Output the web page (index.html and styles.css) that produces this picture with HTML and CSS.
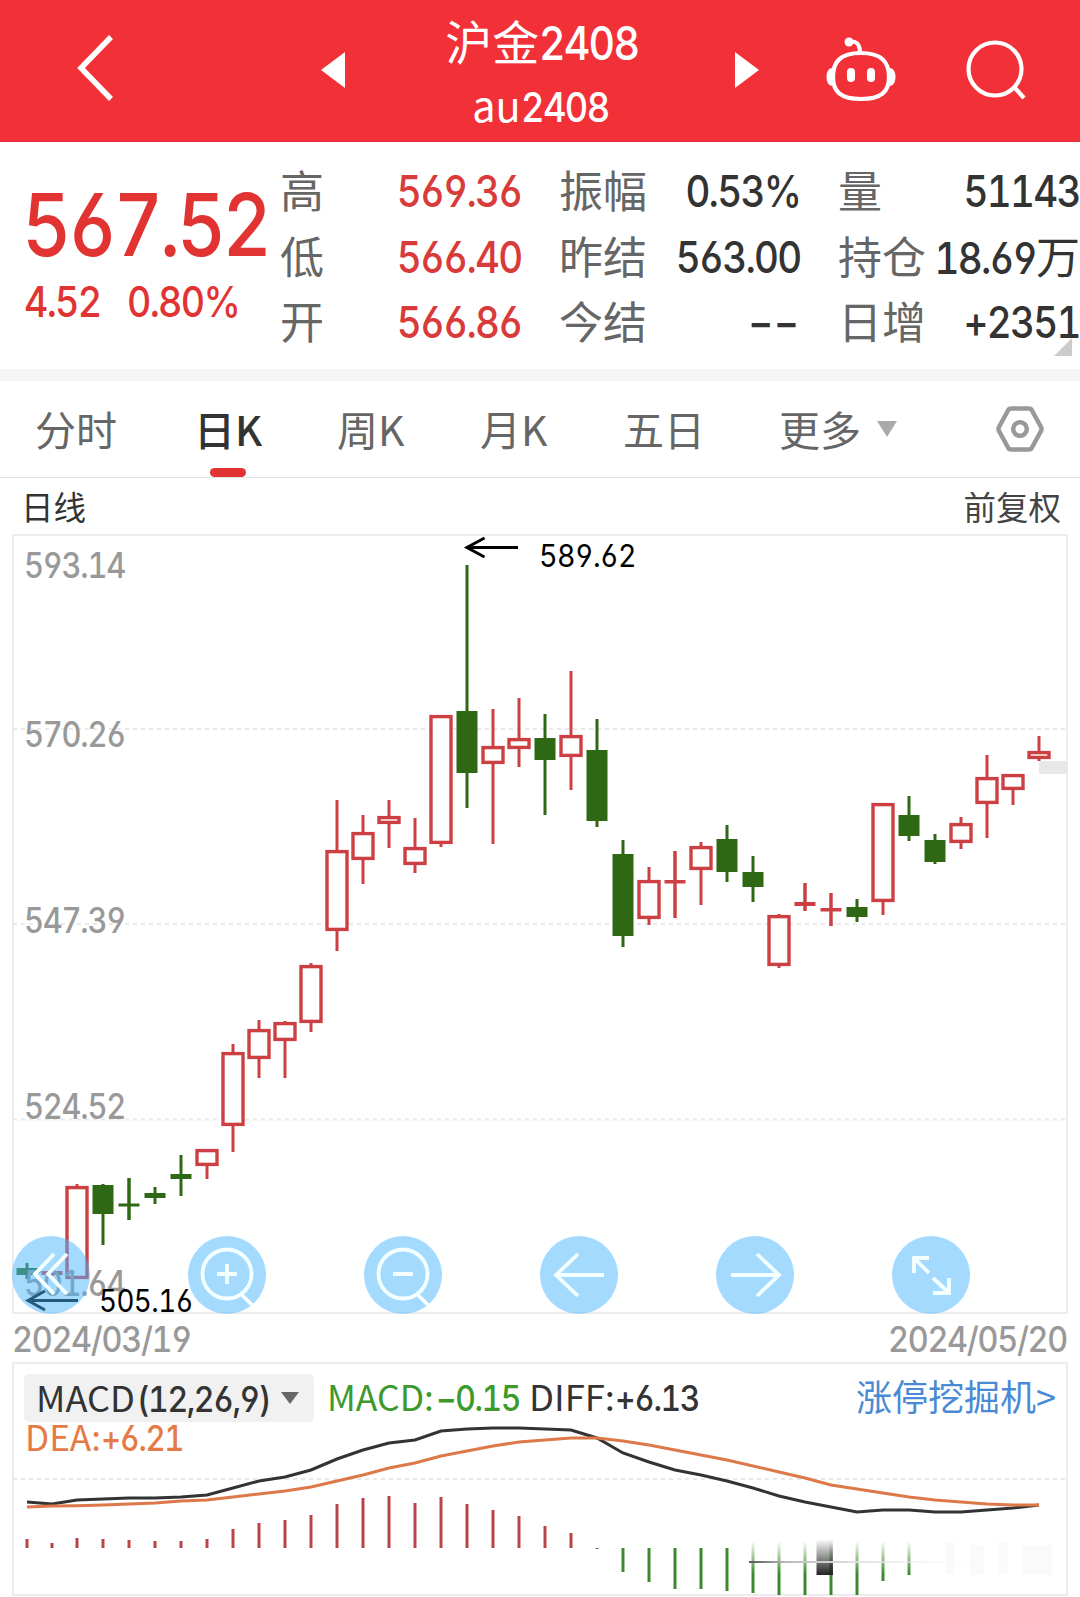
FILE: index.html
```html
<!DOCTYPE html>
<html lang="zh-CN">

<head>
    <meta charset="UTF-8">
    <meta name="viewport" content="width=device-width, initial-scale=1.0">
    <title>沪金2408</title>
    <link rel="stylesheet" href="styles.css">
</head>

<body>
    <header class="topbar">
        <svg class="back" width="38" height="68" viewBox="0 0 38 68"><path d="M35 3 L5 34 L35 65" /></svg>
        <svg class="prev" width="24" height="36" viewBox="0 0 24 36"><path d="M0 18 L24 0 V36 Z" /></svg>
        <div class="title">
            <h1>沪金<span class="num">2408</span></h1>
            <h2>au<span class="num">2408</span></h2>
        </div>
        <svg class="next" width="24" height="36" viewBox="0 0 24 36"><path d="M24 18 L0 0 V36 Z" /></svg>
        <svg class="robot" width="72" height="66" viewBox="0 0 72 66">
            <path d="M36 17 C57 17 64 26 64 41 C64 56 56 63 36 63 C16 63 8 56 8 41 C8 26 15 17 36 17 Z" />
            <path d="M24 6 C31 4 35 8 35 17" />
            <circle class="solid" cx="24" cy="6" r="4.500" />
            <rect class="solid" x="22" y="32" width="8" height="14" rx="4" />
            <rect class="solid" x="42" y="32" width="8" height="14" rx="4" />
            <path class="ears" d="M7 33 C1 33 1 49 7 49 M65 33 C71 33 71 49 65 49" />
        </svg>
        <svg class="search" width="62" height="62" viewBox="0 0 62 62">
            <circle cx="29" cy="30" r="26.500" />
            <path d="M48 48 L58 59" />
        </svg>
    </header>

    <section class="quote">
        <div class="price">
            <p class="last num">567.52</p>
            <p class="change"><span class="num">4.52</span><span class="num">0.80%</span></p>
        </div>
        <dl>
            <div><dt>高</dt><dd class="num up">569.36</dd></div>
            <div><dt>低</dt><dd class="num up">566.40</dd></div>
            <div><dt>开</dt><dd class="num up">566.86</dd></div>
        </dl>
        <dl>
            <div><dt>振幅</dt><dd class="num">0.53%</dd></div>
            <div><dt>昨结</dt><dd class="num">563.00</dd></div>
            <div><dt>今结</dt><dd class="num none">−−</dd></div>
        </dl>
        <dl>
            <div><dt>量</dt><dd class="num">51143</dd></div>
            <div><dt>持仓</dt><dd><span class="num">18.69</span>万</dd></div>
            <div><dt>日增</dt><dd class="num">+2351</dd></div>
        </dl>
        <i class="corner"></i>
    </section>

    <nav class="tabs">
        <a>分时</a>
        <a class="active">日K</a>
        <a>周K</a>
        <a>月K</a>
        <a>五日</a>
        <a>更多<svg class="caret" width="22" height="18" viewBox="0 0 22 18"><path d="M1 1 H21 L11 17 Z" /></svg></a>
        <svg class="settings" width="48" height="46" viewBox="0 0 48 46">
            <path d="M15 2.500 H33 Q35 2.500 36 4.500 L45 21 Q46 23 45 25 L36 41.500 Q35 43.500 33 43.500 H15 Q13 43.500 12 41.500 L3 25 Q2 23 3 21 L12 4.500 Q13 2.500 15 2.500 Z" />
            <circle cx="24" cy="23" r="6.800" />
        </svg>
    </nav>

    <div class="chart-head"><span>日线</span><span class="adjust">前复权</span></div>

    <main class="chart">
        <svg width="1056" height="780" viewBox="12 534 1056 780">
            <rect class="frame" x="13" y="535" width="1054" height="778" />
            <path class="grid" d="M13 729 H1067 M13 924 H1067 M13 1119.500 H1067" />
            <rect class="tag" x="1039" y="761" width="29" height="13" />
            <g id="candles"></g>
            <g class="axis">
                <text x="24" y="577.500" textLength="101">593.14</text>
                <text x="24" y="746.500" textLength="101">570.26</text>
                <text x="24" y="932.500" textLength="101">547.39</text>
                <text x="24" y="1118.500" textLength="101">524.52</text>
                <text x="24" y="1296" textLength="101">501.64</text>
            </g>
            <g class="mark">
                <path d="M518 547.500 H467 M484.500 538 L467 547.500 L484.500 557" />
                <text x="539" y="566.500" textLength="97">589.62</text>
                <path d="M78 1300.500 H28 M45 1291 L28 1300.500 L45 1310" />
                <text x="99" y="1311.500" textLength="94">505.16</text>
            </g>
        </svg>
        <div class="tools">
            <svg viewBox="0 0 78 78"><path d="M42 18 L23 38 L42 58 M55 18 L36 38 L55 58" /></svg>
            <svg viewBox="0 0 78 78"><circle cx="39" cy="38" r="24.500" /><path d="M29 38 H49 M39 28 V48 M54 59 L64 69" /></svg>
            <svg viewBox="0 0 78 78"><circle cx="39" cy="38" r="24.500" /><path d="M29 38 H49 M54 59 L64 69" /></svg>
            <svg viewBox="0 0 78 78"><path d="M64 39 H16 M38 18 L16 39 L38 60" /></svg>
            <svg viewBox="0 0 78 78"><path d="M15 39 H63 M41 18 L63 39 L41 60" /></svg>
            <svg viewBox="0 0 78 78"><path d="M37 37 L22 22 M37 22 H22 V37 M41 42 L57 57 M57 42 V57 H41" /></svg>
        </div>
    </main>

    <div class="dates">
        <svg width="1056" height="48" viewBox="12 1314 1056 48">
            <text x="12" y="1351.500" textLength="179">2024/03/19</text>
            <text x="888" y="1351.500" textLength="179">2024/05/20</text>
        </svg>
    </div>

    <section class="macd">
        <svg width="1056" height="234" viewBox="12 1362 1056 234">
            <defs>
                <linearGradient id="shade" x1="0" y1="0" x2="0" y2="1">
                    <stop offset="0" stop-color="#222" stop-opacity="0" />
                    <stop offset="1" stop-color="#222" />
                </linearGradient>
                <linearGradient id="veil" x1="0" y1="0" x2="0" y2="1">
                    <stop offset="0" stop-color="#fff" />
                    <stop offset="1" stop-color="#fff" stop-opacity="0" />
                </linearGradient>
                <linearGradient id="streak" x1="0" y1="0" x2="1" y2="0">
                    <stop offset="0" stop-color="#555" />
                    <stop offset=".15" stop-color="#bbb" />
                    <stop offset=".4" stop-color="#ddd" />
                    <stop offset="1" stop-color="#fff" stop-opacity="0" />
                </linearGradient>
            </defs>
            <rect class="frame" x="13" y="1363" width="1054" height="232" />
            <path class="grid" d="M13 1479 H1067" />
            <rect class="pill" x="24" y="1374" width="290" height="48" rx="5" />
            <text class="ink" x="36" y="1411.500" textLength="99">MACD</text>
            <text class="ink n" x="137" y="1411.500" textLength="133">(12,26,9)</text>
            <path class="pick" d="M281 1392 H299 L290 1404 Z" />
            <text class="green" x="327" y="1411" textLength="107">MACD:</text>
            <text class="green n" x="436" y="1411" textLength="84">−0.15</text>
            <text class="ink" x="529" y="1411" textLength="86">DIFF:</text>
            <text class="ink n" x="615" y="1411" textLength="84">+6.13</text>
            <text class="orange" x="25" y="1451" textLength="76">DEA:</text>
            <text class="orange n" x="101" y="1451" textLength="82">+6.21</text>
            <text class="link" x="856" y="1411" textLength="200">涨停挖掘机&gt;</text>
            <g id="bars"></g>
            <rect x="745" y="1541" width="178" height="33" fill="url(#veil)" />
            <rect x="816.500" y="1539" width="16.500" height="36" fill="url(#shade)" />
            <rect x="749" y="1561" width="250" height="2" fill="url(#streak)" />
            <g class="haze">
                <rect x="945" y="1542" width="10" height="32" />
                <rect x="970" y="1545" width="14" height="30" />
                <rect x="998" y="1542" width="10" height="32" />
                <rect x="1022" y="1545" width="30" height="30" />
            </g>
            <polyline id="diff" />
            <polyline id="dea" />
        </svg>
    </section>

    <script>
        // [type, high, body top, body bottom, low] in chart units, one per trading day
        const days = [
            ['g', 1263, 1268, 1275, 1279], ['r', 1269, 1271, 1275, 1276], ['r', 1184, 1186, 1279, 1279],
            ['g', 1184, 1185, 1214, 1245], ['g', 1178, 1203.5, 1206.5, 1220], ['g', 1187, 1193, 1198, 1204],
            ['g', 1155, 1174, 1179, 1196], ['r', 1149, 1149, 1166, 1179], ['r', 1044, 1052, 1126, 1152],
            ['r', 1020, 1029, 1059, 1078], ['r', 1021, 1022, 1041, 1078], ['r', 963, 965, 1023, 1032],
            ['r', 800, 850, 931, 951], ['r', 815, 832, 860, 884], ['r', 800, 816, 824, 848],
            ['r', 818, 847, 865, 873], ['r', 715, 715, 844, 847], ['g', 565, 711, 773, 808],
            ['r', 709, 746, 764, 844], ['r', 698, 738, 749, 767], ['g', 714, 738, 760, 815],
            ['r', 671, 735, 757, 790], ['g', 719, 750, 821, 827], ['g', 840, 854, 936, 947],
            ['r', 867, 880, 919, 925], ['r', 851, 880, 883.5, 918], ['r', 842, 846, 870, 905],
            ['g', 825, 839, 872, 882], ['g', 856, 872, 887, 902], ['r', 914, 915, 966, 968],
            ['r', 883, 902, 906, 911], ['r', 893, 908, 911.5, 926], ['g', 899, 907, 917, 922],
            ['r', 803, 803, 902, 915], ['g', 796, 815, 836, 841], ['g', 834, 840, 862, 864],
            ['r', 817, 823, 843, 849], ['r', 755, 777, 804, 838], ['r', 774, 774, 790, 805],
            ['r', 736, 751, 759, 761]
        ];
        const diff = [1502, 1504, 1500, 1499, 1498, 1498, 1497, 1495, 1488, 1481, 1477, 1470, 1459, 1450, 1443, 1440, 1431, 1429, 1428, 1428, 1429, 1430, 1438, 1453, 1462, 1470, 1475, 1481, 1488, 1496, 1502, 1507, 1512, 1510, 1510, 1512, 1512, 1510, 1508, 1505];
        const dea = [1507, 1506, 1505.7, 1505, 1504, 1503, 1501, 1500, 1497, 1494, 1491, 1487, 1481, 1475, 1468, 1463, 1456, 1451, 1446, 1442, 1440, 1438, 1438, 1441, 1445, 1450, 1455, 1460, 1466, 1472, 1478, 1485, 1489, 1493, 1497, 1500, 1502, 1504, 1505, 1505];
        const bars = [1539, 1543, 1538, 1539, 1540, 1541, 1541, 1539, 1529, 1523, 1520, 1515, 1504, 1498, 1496, 1503, 1497, 1504, 1510, 1516, 1526, 1533, 1549, 1572, 1582, 1589, 1589, 1591, 1593, 1595, 1595, 1595, 1595, 1581, 1575];
        const x = i => i < 2 ? 27 + i * 25 : 25 + i * 26;

        let out = '';
        days.forEach(([type, high, top, bottom, low], i) => {
            const c = x(i);
            out += `<path class="wick ${type}" d="M${c} ${high} V${top} M${c} ${bottom} V${low}"/>`;
            if (type === 'g') {
                out += `<rect class="down" x="${c - 10.5}" y="${top}" width="21" height="${bottom - top}"/>`;
            } else if (bottom - top < 5) {
                out += `<rect class="flat" x="${c - 10.5}" y="${top}" width="21" height="${bottom - top}"/>`;
            } else {
                out += `<rect class="rise" x="${c - 10}" y="${top + 1.6}" width="20" height="${bottom - top - 3.2}"/>`;
            }
            if (bottom - top < 5) {
                out += `<path class="wick ${type}" d="M${c} ${high} V${low}"/>`;
            }
        });
        document.getElementById('candles').innerHTML = out;

        document.getElementById('bars').innerHTML = bars.map((y, i) => {
            const start = i > 27 ? 1541 : 1548;
            return `<path class="${y > 1548 ? 'g' : 'r'}" d="M${x(i)} ${start} V${y}"/>`;
        }).join('');

        const points = list => list.map((y, i) => x(i) + ',' + y).join(' ');
        document.getElementById('diff').setAttribute('points', points(diff));
        document.getElementById('dea').setAttribute('points', points(dea));
        document.querySelectorAll('text').forEach(t => t.setAttribute('lengthAdjust', 'spacingAndGlyphs'));
    </script>
</body>

</html>
```
FILE: styles.css
```css
* {
    box-sizing: border-box;
    margin: 0;
    padding: 0;
}

body {
    width: 1080px;
    height: 1597px;
    overflow: hidden;
    background: #fff;
    color: #333;
    font-family: 'Noto Sans CJK SC', sans-serif;
}

svg {
    display: block;
    flex: none;
    overflow: visible;
}

.num {
    display: inline-block;
    font-family: Inter, Roboto, sans-serif;
    font-weight: 530;
    font-feature-settings: 'tnum', 'cv03', 'cv04';
    letter-spacing: -.045em;
    transform: scaleX(.875);
    transform-origin: right;
    white-space: nowrap;
}

/* top bar */
.topbar {
    display: flex;
    height: 142px;
    background: #f23038;
    border-bottom: 1px solid #dd3540;
    fill: none;
    stroke: #fff;
    color: #fff;
}

.back {
    margin: 34px 0 0 76px;
    stroke-width: 5.5;
}

.prev,
.next {
    margin-top: 52px;
    fill: #fff;
    stroke: none;
}

.prev {
    margin-left: 207px;
}

.title {
    width: 390px;
    text-align: center;
    white-space: nowrap;
}

.title h1,
.title h2 {
    font-weight: 400;
}

.title h1 {
    font-size: 47px;
    line-height: 64px;
    margin-top: 8px;
    padding-left: 18px;
}

.title h2 {
    font-size: 41.5px;
    line-height: 60px;
    margin-top: -1px;
    padding-left: 13px;
}

.title .num {
    transform-origin: left;
}

.robot {
    margin: 36px 0 0 66px;
    stroke-width: 4.2;
}

.robot .solid {
    fill: #fff;
    stroke: none;
}

.robot .ears {
    fill: #fff;
    stroke-width: 2;
}

.search {
    margin: 39px 0 0 69px;
    stroke-width: 4.2;
}

/* quote panel */
.quote {
    position: relative;
    display: flex;
    height: 227px;
}

.price {
    width: 280px;
    padding-left: 24px;
    color: #e23333;
}

.price .num {
    transform-origin: left;
}

.last {
    font-size: 87px;
    line-height: 88px;
    margin-top: 39px;
}

.price .last {
    margin-left: -2px;
}

.change {
    display: flex;
    font-size: 43px;
    line-height: 52px;
    margin-top: 6px;
}

.change .num:first-child {
    width: 103px;
}

.quote dl {
    width: 241px;
    margin: 15px 38px 0 0;
}

.quote dl:last-of-type {
    width: 242px;
    margin-right: 0;
}

.quote dl div {
    display: flex;
    justify-content: space-between;
    height: 65.5px;
    line-height: 65.5px;
    font-size: 44px;
    white-space: nowrap;
}

.quote dt {
    color: #666;
}

.quote dd.num {
    padding-top: 2px;
}

.quote .up {
    color: #d93a3a;
}

.quote dd .num {
    margin-left: -40px;
}

.quote .none {
    letter-spacing: .02em;
}

.corner {
    position: absolute;
    right: 8px;
    bottom: 13px;
    border: 9px solid #ccc;
    border-top-color: transparent;
    border-left-color: transparent;
}

/* period tabs */
.tabs {
    display: flex;
    height: 109px;
    padding-left: 35px;
    border-top: 12px solid #f5f5f5;
    border-bottom: 1px solid #e2e2e2;
    font-size: 41px;
    line-height: 95px;
    color: #666;
}

.tabs a {
    display: flex;
    width: 143px;
}

.tabs a:first-child {
    width: 159px;
}

.tabs .active {
    position: relative;
    color: #333;
    font-weight: 500;
}

.tabs .active::after {
    content: '';
    position: absolute;
    left: 16px;
    bottom: 0;
    width: 36px;
    height: 9px;
    border-radius: 5px;
    background: #e23333;
}

.tabs a:nth-child(5) {
    width: 156px;
}

.tabs a:nth-child(6) {
    width: 217px;
}

.caret {
    margin: 39px 0 0 15px;
    fill: #aaa;
}

.settings {
    margin-top: 25px;
    fill: none;
    stroke: #999;
    stroke-width: 4.5;
}

/* k-line chart */
.chart-head {
    display: flex;
    justify-content: space-between;
    height: 56px;
    padding: 0 19px 0 21px;
    font-size: 32.5px;
    line-height: 56px;
}

.adjust {
    color: #444;
}

.chart {
    position: relative;
    margin-left: 12px;
}

.frame {
    fill: none;
    stroke: #ececec;
    stroke-width: 2;
}

.grid {
    stroke: #e9e9e9;
    stroke-width: 2;
    stroke-dasharray: 4 4;
}

.tag {
    fill: #e8e8e8;
}

.wick {
    stroke-width: 3;
}

.r {
    stroke: #cc4044;
}

.g {
    stroke: #2f6814;
}

.rise {
    fill: #fff;
    stroke: #cc4044;
    stroke-width: 3.4;
}

.flat {
    fill: #cc4044;
}

.down {
    fill: #2f6814;
}

.axis,
.dates {
    fill: #999;
    font: 530 35px Inter, Roboto, sans-serif;
    font-feature-settings: 'tnum', 'cv03', 'cv04';
    letter-spacing: -.04em;
}

.mark {
    font: 400 31px Inter, Roboto, sans-serif;
    font-feature-settings: 'tnum', 'cv03', 'cv04';
    letter-spacing: -.02em;
}

.mark path {
    fill: none;
    stroke: #000;
    stroke-width: 3;
}

.tools {
    position: absolute;
    left: 0;
    bottom: 0;
    display: flex;
    gap: 98px;
}

.tools svg {
    width: 78px;
    height: 78px;
    border-radius: 50%;
    background: rgba(75, 181, 255, .5);
    fill: none;
    stroke: #f4ffff;
    stroke-width: 3.8;
}

.dates {
    margin-left: 12px;
}

/* macd panel */
.macd {
    margin-left: 12px;
    font: 400 35px 'Noto Sans CJK SC', sans-serif;
}

.macd .n {
    font: 530 35px Inter, Roboto, sans-serif;
    font-feature-settings: 'tnum', 'cv03', 'cv04';
    letter-spacing: -.045em;
}

.pill {
    fill: #f1f1f1;
}

.pick {
    fill: #666;
}

.ink {
    fill: #333;
}

.green {
    fill: #3c9a2c;
}

.orange {
    fill: #e57a45;
}

.link {
    fill: #4a8ad4;
    font-size: 36px;
}

.haze {
    fill: #fafafa;
}

#bars {
    stroke-width: 3;
}

#bars .g {
    stroke: #3a8a2c;
}

#bars .r {
    stroke: #b8444a;
}

#diff,
#dea {
    fill: none;
    stroke: #333;
    stroke-width: 3;
}

#dea {
    stroke: #dd7848;
}
```
